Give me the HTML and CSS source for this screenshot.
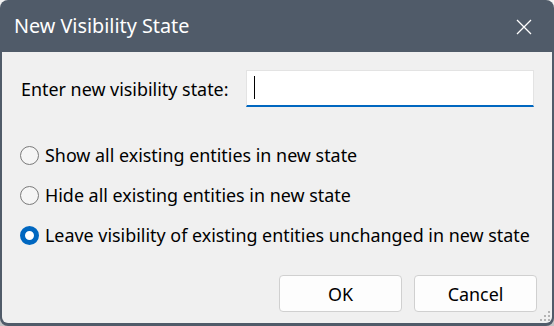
FILE: index.html
```html
<!doctype html>
<html>
	<head>
		<meta charset="utf-8">
		<link rel="stylesheet" href="styles.css">
	</head>
	<body>
		<div class="window">
			<div class="titlebar">
				<span class="title">New Visibility State</span>
				<span class="close">
					<svg width="16" height="16" viewBox="0 0 16 16"><path d="M1 1 L15 15 M15 1 L1 15" stroke="#ffffff" stroke-width="1.3" fill="none"/></svg>
				</span>
			</div>
			<div class="content">
				<div class="field-row">
					<label class="field-label" for="state">Enter new visibility state:</label>
					<div class="text-input" id="state"><span class="caret"></span></div>
				</div>

				<div class="options">
					<div class="option">
						<span class="radio"></span>
						<span class="option-text">Show all existing entities in new state</span>
					</div>
					<div class="option">
						<span class="radio"></span>
						<span class="option-text">Hide all existing entities in new state</span>
					</div>
					<div class="option">
						<span class="radio checked"></span>
						<span class="option-text">Leave visibility of existing entities unchanged in new state</span>
					</div>
				</div>

				<div class="buttons">
					<button class="dlg-button">OK</button>
					<button class="dlg-button">Cancel</button>
				</div>
				<div class="grip">
					<i></i><i></i><i></i><i></i><i></i><i></i>
				</div>
			</div>
		</div>
	</body>
</html>
```

FILE: styles.css
```css
html, body {
	margin: 0;
	padding: 0;
}

body {
	width: 554px;
	height: 326px;
	background: linear-gradient(#f3f3f3, #c4c4c4);
	font-family: "Noto Sans", "Open Sans", sans-serif;
	color: #000;
	overflow: hidden;
}

.window {
	width: 554px;
	height: 326px;
	box-sizing: border-box;
	background: #505b69;
	border-radius: 8px;
	padding: 0 2px 3px 2px;
	display: flex;
	flex-direction: column;
}

.titlebar {
	height: 52px;
	flex: none;
	display: flex;
	align-items: center;
	padding-left: 12px;
	padding-right: 20px;
	color: #fff;
}
	.title {
		font-size: 19.8px;
		flex: 1;
		margin-top: -1px;
	}
	.close {
		display: flex;
		margin-top: 1px;
	}

.content {
	flex: 1;
	position: relative;
	background: #f0f0f0;
	border-radius: 0 0 6px 6px;
	padding: 18px 18px 0 18px;
	display: flex;
	flex-direction: column;
	font-size: 17.9px;
}

.field-row {
	display: flex;
	align-items: center;
	padding-left: 1px;
}
	.field-label {
		width: 225px;
	}
	.text-input {
		width: 288px;
		height: 37px;
		box-sizing: border-box;
		background: #fff;
		border: 1px solid #e3e3e3;
		border-bottom: 2px solid #0067c0;
		display: flex;
		align-items: center;
		padding-left: 7px;
	}
	.caret {
		width: 1px;
		height: 23px;
		background: #000;
		margin-bottom: 1px;
	}

.options {
	margin-top: 28px;
	display: flex;
	flex-direction: column;
}

.option {
	height: 40px;
	display: flex;
	align-items: center;
}
	.radio {
		width: 19px;
		height: 19px;
		box-sizing: border-box;
		border: 1px solid #7a7a7a;
		border-radius: 50%;
		background: #f5f5f5;
		margin-right: 6px;
		flex: none;
	}
	.radio.checked {
		border: 5.5px solid #0067c0;
		background: #fff;
	}

.buttons {
	margin-top: 20px;
	display: flex;
	justify-content: flex-end;
	gap: 12px;
	margin-right: -3px;
}
	.dlg-button {
		width: 123px;
		height: 37px;
		background: #fdfdfd;
		border: 1px solid #d0d0d0;
		border-radius: 4px;
		font-family: inherit;
		font-size: 17.9px;
		color: #000;
	}

.grip {
	position: absolute;
	right: 2px;
	bottom: 1px;
	width: 11px;
	height: 11px;
}
	.grip i {
		position: absolute;
		width: 2px;
		height: 2px;
		background: #b4b4b4;
	}
	.grip i:nth-child(1) { right: 0; top: 0; }
	.grip i:nth-child(2) { right: 4px; top: 4px; }
	.grip i:nth-child(3) { right: 0; top: 4px; }
	.grip i:nth-child(4) { right: 8px; top: 8px; }
	.grip i:nth-child(5) { right: 4px; top: 8px; }
	.grip i:nth-child(6) { right: 0; top: 8px; }
```
